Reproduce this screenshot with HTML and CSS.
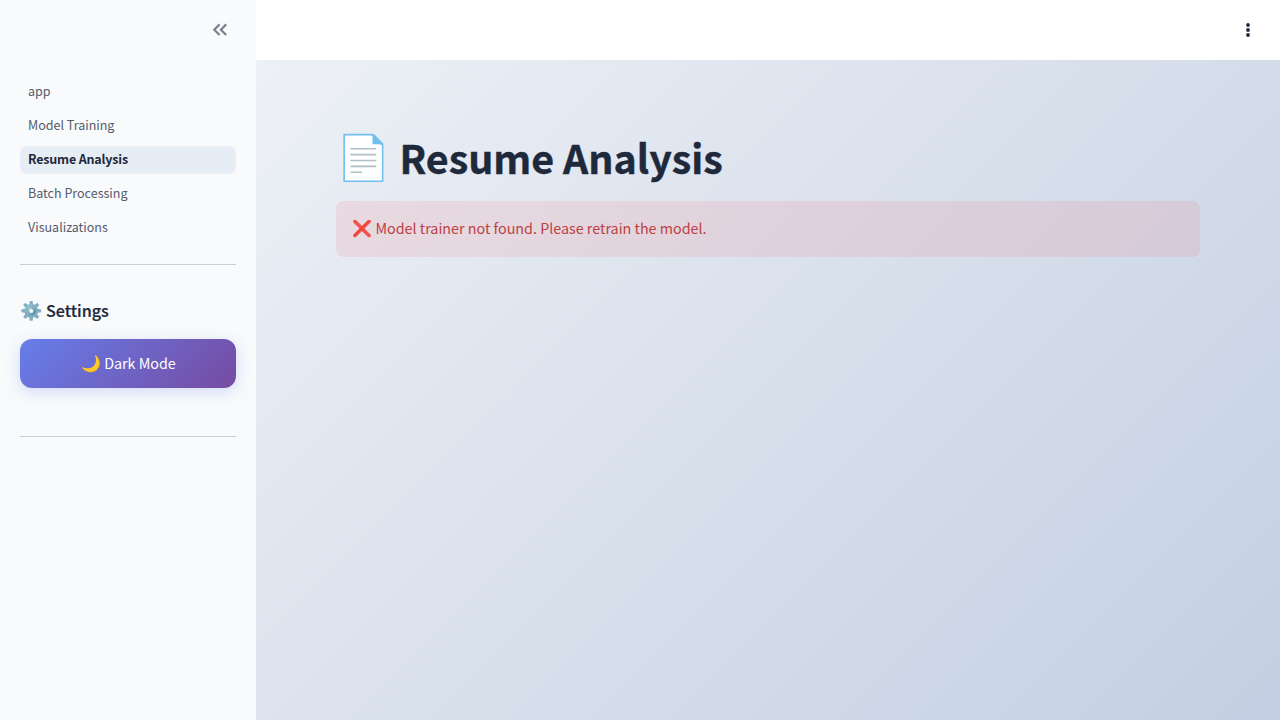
FILE: index.html
```html
<!DOCTYPE html>
<html lang="en">
<head>
<meta charset="utf-8">
<title>Resume Analysis</title>
<link rel="stylesheet" href="styles.css">
</head>
<body>
<div class="app">
  <aside class="sidebar">
    <div class="sidebar-header">
      <svg class="collapse" width="24" height="24" viewBox="0 0 24 24" fill="none" stroke="currentColor" stroke-width="2.2"><path d="M11.6 6.4 6.3 11.7l5.3 5.3M18.2 6.4 12.9 11.7l5.3 5.3"/></svg>
    </div>
    <nav class="nav">
      <a class="nav-link">app</a>
      <a class="nav-link">Model Training</a>
      <a class="nav-link active">Resume Analysis</a>
      <a class="nav-link">Batch Processing</a>
      <a class="nav-link">Visualizations</a>
    </nav>
    <hr class="rule">
    <h3 class="settings"><span class="emoji">⚙️</span><span class="settings-text">Settings</span></h3>
    <button class="mode"><span class="emoji">🌙</span><span class="mode-text">Dark Mode</span></button>
    <hr class="rule rule-bottom">
  </aside>
  <div class="page">
    <header class="topbar">
      <svg class="menu" width="20" height="20" viewBox="0 0 20 20" fill="currentColor"><circle cx="10" cy="5" r="1.9"/><circle cx="10" cy="10" r="1.9"/><circle cx="10" cy="15" r="1.9"/></svg>
    </header>
    <main class="content">
      <h1 class="title"><span class="emoji">📄</span><span class="title-text">Resume Analysis</span></h1>
      <div class="alert"><span class="emoji">❌</span><span class="alert-text">Model trainer not found. Please retrain the model.</span></div>
    </main>
  </div>
</div>
</body>
</html>
```
FILE: styles.css
```css
* { box-sizing: border-box; }
body { margin: 0; font-family: "Noto Sans CJK SC", sans-serif; color: #1e293b; }
.app { display: flex; width: 1280px; height: 720px; overflow: hidden; background: linear-gradient(135deg, #f5f7fa 0%, #c3cfe2 100%); }
.sidebar { width: 256px; padding: 0 20px; background: #f8fafc; }
.sidebar-header { display: flex; justify-content: flex-end; align-items: center; height: 60px; padding-right: 4px; }
.collapse { color: #7c7f8f; }
.nav { display: flex; flex-direction: column; gap: 6px; padding-top: 18px; }
.nav-link { height: 28px; padding: 0 8px; border-radius: 8px; font-size: 12.53px; line-height: 26px; color: #565b6a; white-space: nowrap; }
.active { background: #e7edf5; font-weight: 700; letter-spacing: -.19px; color: #1e293b; }
.rule { height: 1px; margin: 22px 0 0; border: 0; background: #cbcdd1; }
.emoji { font-family: "Noto Color Emoji", sans-serif; font-weight: 400; }
.settings { display: flex; align-items: center; gap: 3.6px; height: 28px; margin: 32px 0 14px; font-size: 18px; line-height: 28px; font-weight: 500; white-space: nowrap; }
.settings-text { padding-bottom: 2px; font-size: 16.1px; -webkit-text-stroke: .2px; }
.mode { display: flex; justify-content: center; align-items: center; gap: 3px; width: 100%; height: 49px; padding: 0 0 0 1px; border: 0; border-radius: 12px; background: linear-gradient(135deg, #667eea 0%, #764ba2 100%); box-shadow: 0 4px 15px rgba(102, 126, 234, .25); color: #fff; font-size: 16px; font-family: inherit; }
.mode-text { padding-bottom: 2px; font-size: 14.32px; }
.rule-bottom { margin-top: 48px; }
.page { flex: 1; }
.topbar { display: flex; justify-content: flex-end; align-items: center; height: 60px; padding-right: 22px; background: #fff; }
.content { padding: 69px 80px 0; }
.title { display: flex; align-items: center; gap: 8.6px; height: 58px; margin: 0 0 14px; font-size: 44px; line-height: 58px; white-space: nowrap; }
.title-text { padding-bottom: 3px; font-size: 39.4px; letter-spacing: 0; -webkit-text-stroke: .4px; }
.alert { display: flex; align-items: center; gap: 3.5px; height: 56px; padding: 0 16px 2px; border-radius: 8px; background: rgba(255, 43, 43, .09); color: #bd4043; font-size: 16px; white-space: nowrap; }
.alert-text { padding-bottom: 2px; font-size: 14.32px; }
```
